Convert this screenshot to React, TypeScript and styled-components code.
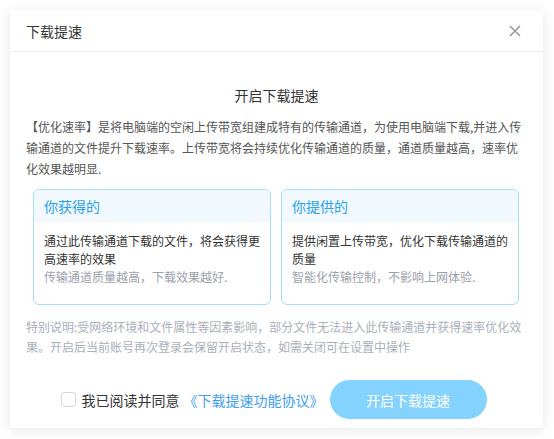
import styled, { createGlobalStyle } from "styled-components";

const GlobalStyle = createGlobalStyle`
  html, body {
    margin: 0;
    padding: 0;
    background: #ffffff;
  }
  body {
    font-family: "Noto Sans CJK SC", "Noto Sans", sans-serif;
  }
`

const Page = styled.div`
  padding: 10px;
`

const Dialog = styled.div`
  width: 533px;
  height: 418px;
  background: #fff;
  box-shadow: 0 2px 12px rgba(0, 0, 0, 0.1);
  display: flex;
  flex-direction: column;
`

const Header = styled.div`
  height: 41px;
  border-bottom: 1px solid #eeeeee;
  display: flex;
  align-items: center;
  justify-content: space-between;
  padding: 0 21px 0 16px;
`

const Title = styled.div`
  font-size: 14px;
  color: #333;
`

const Close = styled.button`
  border: none;
  background: none;
  padding: 0;
  width: 14px;
  height: 14px;
  display: flex;
  cursor: pointer;
`

const Body = styled.div`
  padding: 33px 16px 0;
  display: flex;
  flex-direction: column;
`

const Heading = styled.div`
  font-size: 14px;
  line-height: 20px;
  color: #333;
  text-align: center;
`

const Intro = styled.p`
  margin: 11px 0 0;
  font-size: 12px;
  line-height: 21px;
  color: #555;
`

const Cards = styled.div`
  display: grid;
  grid-template-columns: 238px 238px;
  gap: 10px;
  margin: 10px 8px 0 7px;
`

const Card = styled.div`
  height: 116px;
  box-sizing: border-box;
  border: 1px solid #a6dcfa;
  border-radius: 6px;
  overflow: hidden;
`

const CardHead = styled.div`
  height: 32px;
  background: #f1f8fe;
  display: flex;
  align-items: center;
  padding: 0 10px;
  font-size: 14px;
  color: #26a3ee;
`

const CardBody = styled.div`
  padding: 10px 10px 0;
  font-size: 12px;
  line-height: 18px;
`

const Main = styled.div`
  color: #333;
`

const Sub = styled.div`
  color: #9ba1ab;
`

const Note = styled.p`
  margin: 12px 0 0;
  font-size: 12px;
  line-height: 20px;
  color: #a9afbb;
`

const Footer = styled.div`
  margin-top: 23px;
  display: flex;
  align-items: center;
  justify-content: center;
  padding-right: 6px;
`

const Agree = styled.label`
  display: flex;
  align-items: center;
  font-size: 14px;
  color: #333;
  cursor: pointer;
`

const Box = styled.span`
  width: 15px;
  height: 15px;
  box-sizing: border-box;
  border: 1px solid #d3d6e2;
  border-radius: 3px;
  margin-right: 6px;
`

const Link = styled.a`
  color: #3c9ef5;
  font-size: 14px;
  margin-left: 4px;
  text-decoration: none;
`

const StartBtn = styled.button`
  margin-left: 6px;
  width: 157px;
  height: 39px;
  border: none;
  border-radius: 20px;
  background: #84d2fe;
  color: #fff;
  font-size: 14px;
  font-family: inherit;
`

export default function App() {
  return (
    <Page>
      <GlobalStyle />
      <Dialog>
        <Header>
          <Title>下载提速</Title>
          <Close aria-label="关闭">
            <svg width="14" height="14" viewBox="0 0 14 14">
              <path d="M2 2L12 12M12 2L2 12" stroke="#999" strokeWidth="1.6" />
            </svg>
          </Close>
        </Header>
        <Body>
          <Heading>开启下载提速</Heading>
          <Intro>
            【优化速率】是将电脑端的空闲上传带宽组建成特有的传输通道，为使用电脑端下载,并进入传输通道的文件提升下载速率。上传带宽将会持续优化传输通道的质量，通道质量越高，速率优化效果越明显.
          </Intro>
          <Cards>
            <Card>
              <CardHead>你获得的</CardHead>
              <CardBody>
                <Main>通过此传输通道下载的文件，将会获得更高速率的效果</Main>
                <Sub>传输通道质量越高，下载效果越好.</Sub>
              </CardBody>
            </Card>
            <Card>
              <CardHead>你提供的</CardHead>
              <CardBody>
                <Main>提供闲置上传带宽，优化下载传输通道的质量</Main>
                <Sub>智能化传输控制，不影响上网体验.</Sub>
              </CardBody>
            </Card>
          </Cards>
          <Note>
            特别说明:受网络环境和文件属性等因素影响，部分文件无法进入此传输通道并获得速率优化效果。开启后当前账号再次登录会保留开启状态，如需关闭可在设置中操作
          </Note>
          <Footer>
            <Agree>
              <Box />
              我已阅读并同意
            </Agree>
            <Link href="#">《下载提速功能协议》</Link>
            <StartBtn>开启下载提速</StartBtn>
          </Footer>
        </Body>
      </Dialog>
    </Page>
  )
}
